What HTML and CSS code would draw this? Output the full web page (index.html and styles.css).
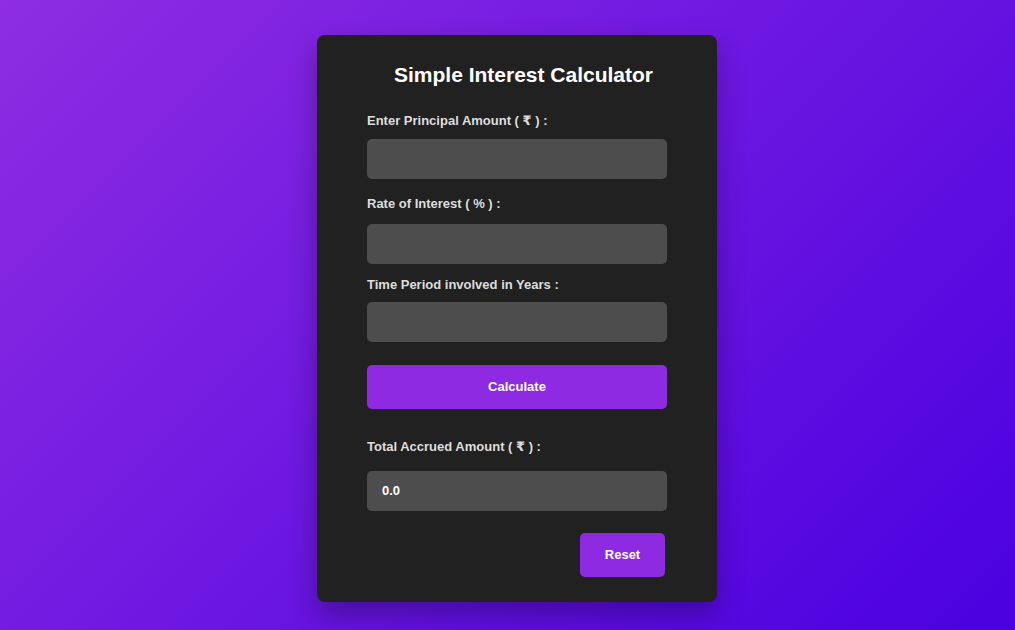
FILE: index.html
```html
<!DOCTYPE html>
<html lang="en">
<head>
<meta charset="utf-8">
<title>Simple Interest Calculator</title>
<link rel="stylesheet" href="styles.css">
</head>
<body>
<main class="card">
  <h1 class="title">Simple Interest Calculator</h1>
  <label class="label label-first">Enter Principal Amount ( ₹ ) :</label>
  <div class="field field-1"></div>
  <label class="label label-2">Rate of Interest ( % ) :</label>
  <div class="field field-2"></div>
  <label class="label label-3">Time Period involved in Years :</label>
  <div class="field field-3"></div>
  <button class="btn btn-calc">Calculate</button>
  <label class="label label-total">Total Accrued Amount ( ₹ ) :</label>
  <div class="field output">0.0</div>
  <div class="actions"><button class="btn btn-reset">Reset</button></div>
</main>
</body>
</html>
```
FILE: styles.css
```css
html, body {
  margin: 0;
  height: 100%;
}
body {
  background: linear-gradient(135deg, #8e2de2 0%, #4a00e0 100%);
  font-family: "Liberation Sans", Arial, "DejaVu Sans", sans-serif;
  display: flex;
  justify-content: center;
  align-items: flex-start;
  padding: 35px 0 0 19px;
  box-sizing: border-box;
}
.card {
  width: 400px;
  box-sizing: border-box;
  background: #212121;
  border-radius: 8px;
  padding: 28px 50px 25px;
  display: flex;
  flex-direction: column;
  box-shadow: 0 12px 28px rgba(0, 0, 0, 0.3);
}
.title {
  margin: 0;
  padding-left: 13px;
  font-size: 21px;
  line-height: 24px;
  font-weight: bold;
  color: #ffffff;
  text-align: center;
}
.label {
  display: block;
  font-size: 13px;
  line-height: 18px;
  font-weight: bold;
  color: #dddddd;
}
.label-first { margin-top: 25px; }
.label-2 { margin-top: 16px; }
.label-3 { margin-top: 12px; }
.label-total { margin-top: 29px; }
.field {
  height: 40px;
  background: #4d4d4d;
  border-radius: 5px;
  box-sizing: border-box;
}
.field-1 { margin-top: 9px; }
.field-2 { margin-top: 11px; }
.field-3 { margin-top: 8px; }
.output {
  margin-top: 15px;
  padding: 0 0 2px 15px;
  display: flex;
  align-items: center;
  color: #ffffff;
  font-size: 13px;
  font-weight: bold;
}
.btn {
  border: none;
  background: #8e2be2;
  color: #ffffff;
  font-family: inherit;
  font-size: 13px;
  font-weight: bold;
  border-radius: 5px;
  height: 44px;
  padding: 0 0 2px;
}
.btn-calc {
  margin-top: 23px;
  width: 100%;
}
.actions {
  margin-top: 22px;
  display: flex;
  justify-content: flex-end;
  padding-right: 2px;
}
.btn-reset {
  width: 85px;
}
```
